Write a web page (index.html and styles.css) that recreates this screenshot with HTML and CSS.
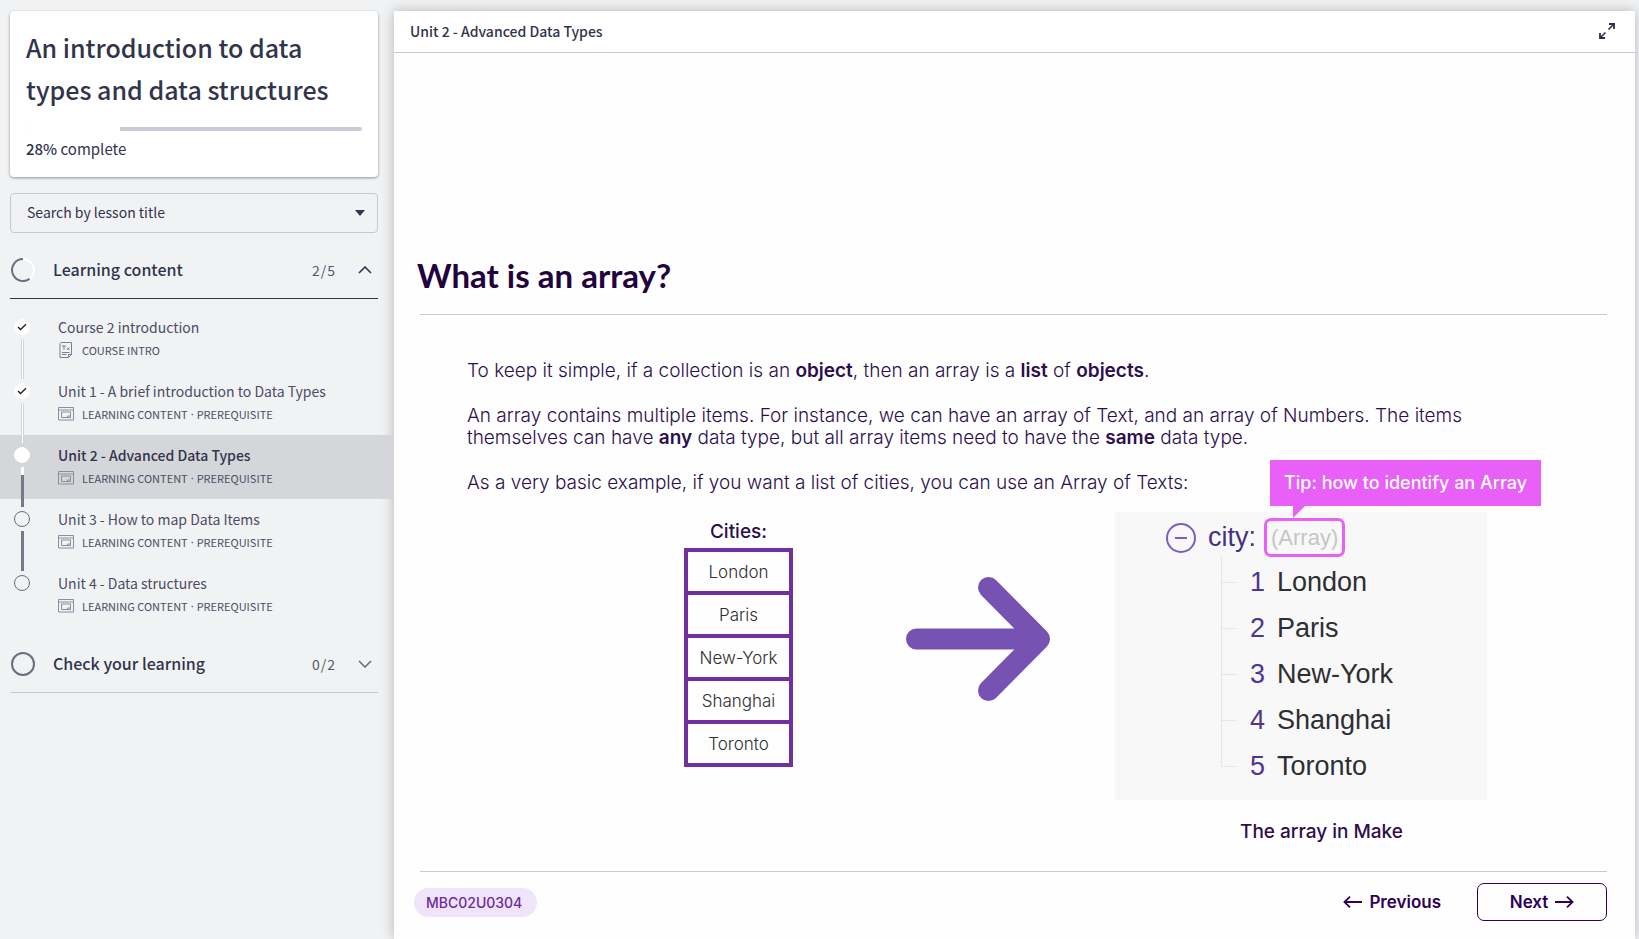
FILE: index.html
```html
<!DOCTYPE html>
<html lang="en">
<head>
<meta charset="utf-8">
<title>An introduction to data types and data structures</title>
<link rel="stylesheet" href="styles.css">
</head>
<body>
<svg class="sprite" aria-hidden="true">
  <symbol id="window" viewBox="0 0 16 14">
    <path d="M.5 .5h15v12.500h-15zM.5 3h15M3.500 5h9v5.500h-9zM9.500 10.500v-1.500h3" fill="none" stroke="#8b8d9e"/>
  </symbol>
  <symbol id="check" viewBox="0 0 10 8">
    <path d="M1 4l2.500 2.500L9 1.300" fill="none" stroke="#222230" stroke-width="1.400"/>
  </symbol>
</svg>
<div class="app">
  <aside class="sidebar">
    <section class="course">
      <h1 class="course-title">An introduction to data types and data structures</h1>
      <div class="progress" role="progressbar" aria-valuenow="28" aria-valuemin="0" aria-valuemax="100" aria-label="Course progress"><div class="progress-fill" style="width:28%"></div></div>
      <p class="course-status"><strong>28%</strong> complete</p>
    </section>

    <div class="search">
      <select class="search-select" aria-label="Search by lesson title"><option>Search by lesson title</option></select>
      <svg class="search-arrow" width="10" height="6" viewBox="0 0 10 6"><path d="M0 0h10L5 6z" fill="#31344b"/></svg>
    </div>

    <nav class="outline">
      <button class="section section-open" type="button">
        <svg width="24" height="24" viewBox="0 0 24 24" fill="none"><circle cx="12" cy="12" r="11" stroke="#fff" stroke-width="2"/><path d="M12 1a11 11 0 1 0 6.500 19.900" stroke="#6b6d80" stroke-width="2"/></svg>
        <span class="section-name">Learning content</span>
        <span class="section-count">2/5</span>
        <svg width="14" height="8" viewBox="0 0 14 8"><path d="M1 7l6-6 6 6" fill="none" stroke="#31344b" stroke-width="1.600"/></svg>
      </button>
      <ul class="lessons">
        <li class="lesson done"><a class="lesson-link" href="#l1">
          <span class="dot"><svg width="10" height="8"><use href="#check"/></svg></span>
          <span class="lesson-title">Course 2 introduction</span>
          <span class="lesson-meta"><svg class="meta-icon" width="16" height="16" viewBox="0 0 16 16" fill="none" stroke="#7d7f92"><path d="M3 .5h10.500v12l-3 3h-8.500V1.500zM10.500 15.500v-3h3M4 4h4M6 4v4M9 5.500l2.500 2.500M11.500 5.500L9 8M4 10.500h7.500M4 12.500h4.500"/></svg>COURSE INTRO</span>
        </a></li>
        <li class="lesson done"><a class="lesson-link" href="#l2">
          <span class="dot"><svg width="10" height="8"><use href="#check"/></svg></span>
          <span class="lesson-title">Unit 1 - A brief introduction to Data Types</span>
          <span class="lesson-meta"><svg class="meta-icon" width="16" height="14"><use href="#window"/></svg>LEARNING CONTENT<i class="sep">·</i>PREREQUISITE</span>
        </a></li>
        <li class="lesson current"><a class="lesson-link" href="#l3" aria-current="page">
          <span class="dot"></span>
          <span class="lesson-title">Unit 2 - Advanced Data Types</span>
          <span class="lesson-meta"><svg class="meta-icon" width="16" height="14"><use href="#window"/></svg>LEARNING CONTENT<i class="sep">·</i>PREREQUISITE</span>
        </a></li>
        <li class="lesson"><a class="lesson-link" href="#l4">
          <span class="dot"></span>
          <span class="lesson-title">Unit 3 - How to map Data Items</span>
          <span class="lesson-meta"><svg class="meta-icon" width="16" height="14"><use href="#window"/></svg>LEARNING CONTENT<i class="sep">·</i>PREREQUISITE</span>
        </a></li>
        <li class="lesson"><a class="lesson-link" href="#l5">
          <span class="dot"></span>
          <span class="lesson-title">Unit 4 - Data structures</span>
          <span class="lesson-meta"><svg class="meta-icon" width="16" height="14"><use href="#window"/></svg>LEARNING CONTENT<i class="sep">·</i>PREREQUISITE</span>
        </a></li>
      </ul>
      <button class="section" type="button">
        <svg width="24" height="24" viewBox="0 0 24 24" fill="none"><circle cx="12" cy="12" r="11" stroke="#6b6d80" stroke-width="2"/></svg>
        <span class="section-name">Check your learning</span>
        <span class="section-count">0/2</span>
        <svg width="14" height="8" viewBox="0 0 14 8"><path d="M1 1l6 6 6-6" fill="none" stroke="#6b6d80" stroke-width="1.600"/></svg>
      </button>
    </nav>
  </aside>

  <main class="viewer">
    <header class="viewer-bar">
      <h2 class="viewer-title">Unit 2 - Advanced Data Types</h2>
      <button class="expand" type="button" aria-label="Full screen"><svg width="16" height="16" viewBox="0 0 16 16" fill="none" stroke="#2c2e4a"><path d="M9.500 6.500L14.500 1.500M6.500 9.500L1.500 14.500" stroke-width="1.500"/><path d="M10 1h5v5M6 15H1v-5" stroke-width="1.800"/></svg></button>
    </header>

    <article class="slide">
      <h3 class="slide-title">What is an array?</h3>
      <div class="slide-body">
        <div class="prose">
          <p>To keep it simple, if a collection is an <b>object</b>, then an array is a <b>list</b> of <b>objects</b>.</p>
          <p>An array contains multiple items. For instance, we can have an array of Text, and an array of Numbers. The items themselves can have <b>any</b> data type, but all array items need to have the <b>same</b> data type.</p>
          <p>As a very basic example, if you want a list of cities, you can use an Array of Texts:</p>
        </div>
        <div class="figures">
          <table class="cities">
            <caption>Cities:</caption>
            <tbody>
              <tr><td>London</td></tr>
              <tr><td>Paris</td></tr>
              <tr><td>New-York</td></tr>
              <tr><td>Shanghai</td></tr>
              <tr><td>Toronto</td></tr>
            </tbody>
          </table>
          <svg class="arrow" width="144" height="124" viewBox="0 0 144 124" fill="none" stroke="#7652b3" stroke-width="21" stroke-linecap="round" stroke-linejoin="round"><path d="M10.500 62H132M82.500 10.500L133.500 62L82.500 113.500"/><path d="M112 42L132 62L112 82z" fill="#7652b3" stroke="none"/></svg>
          <figure class="sample">
            <div class="panel">
              <div class="node">
                <svg width="30" height="30" viewBox="0 0 30 30" fill="none" stroke="#7b5cc4" stroke-width="2"><circle cx="15" cy="15" r="14"/><path d="M9 15h12"/></svg>
                <span class="node-name">city:</span>
                <span class="node-type">(Array)<span class="tip">Tip: how to identify an Array<svg class="tip-tail" width="12" height="12" viewBox="0 0 12 12"><path d="M0 0h12L0 12z" fill="#e960f9"/></svg></span></span>
              </div>
              <ol class="tree">
                <li><span class="index">1</span>London</li>
                <li><span class="index">2</span>Paris</li>
                <li><span class="index">3</span>New-York</li>
                <li><span class="index">4</span>Shanghai</li>
                <li><span class="index">5</span>Toronto</li>
              </ol>
            </div>
            <figcaption class="sample-caption">The array in Make</figcaption>
          </figure>
        </div>
      </div>
      <footer class="slide-foot">
        <span class="code">MBC02U0304</span>
        <button class="nav-btn" type="button"><svg width="20" height="12" viewBox="0 0 20 12" fill="none" stroke="#2d0059" stroke-width="1.800"><path d="M19 6H1.500M7 .7L1.500 6 7 11.300"/></svg>Previous</button>
        <button class="nav-btn nav-next" type="button">Next<svg width="20" height="12" viewBox="0 0 20 12" fill="none" stroke="#2d0059" stroke-width="1.800"><path d="M1 6h17.500M13 .7L18.500 6 13 11.300"/></svg></button>
      </footer>
    </article>
  </main>
</div>
</body>
</html>
```
FILE: styles.css
```css
*, *::before, *::after { box-sizing: border-box; }
body {
  margin: 0;
  background: #f1f2f4;
  color: #31344b;
  font-family: "Noto Sans CJK SC", "Noto Sans", sans-serif;
  font-size: 14px;
}
h1, h2, h3, p, ul, ol, figure { margin: 0; padding: 0; }
ul, ol { list-style: none; }
button { font: inherit; color: inherit; background: none; border: 0; padding: 0; cursor: pointer; }
a { color: inherit; text-decoration: none; }
svg { flex: none; display: block; }
.sprite { position: absolute; width: 0; height: 0; }

.app { display: grid; grid-template-columns: 394px 1fr; min-height: 100vh; overflow: hidden; }

/* Sidebar */
.sidebar { padding-top: 11px; }
.course {
  margin: 0 16px 16px 10px;
  padding: 15px 16px 16px;
  background: #fff;
  border-radius: 4px;
  box-shadow: 0 1px 3px rgba(0, 0, 0, .4);
}
.course-title { font-size: 25px; line-height: 42px; font-weight: 500; }
.progress { margin-top: 17px; height: 4px; border-radius: 2px; background: #c9ccd6; overflow: hidden; }
.progress-fill { height: 100%; background: #fff; }
.course-status { margin-top: 6px; font-size: 15px; line-height: 24px; }
.course-status strong { font-weight: 500; }

.search { position: relative; margin: 0 16px 0 10px; }
.search-select {
  width: 100%; height: 40px; padding: 0 16px 2px;
  appearance: none;
  font: inherit; color: inherit;
  background: none;
  border: 1px solid #c5c8d3; border-radius: 4px;
}
.search-arrow { position: absolute; right: 13px; top: 17px; }

.outline { margin-top: 9px; }
.section {
  display: flex; align-items: center;
  width: calc(100% - 26px); height: 57px;
  margin: 0 16px 0 10px; padding: 0 6px 0 1px;
  border-bottom: 1px solid #c5c8d3;
  text-align: left;
}
.section-open { border-bottom-color: #31344b; }
.section-name { flex: 1; margin-left: 18px; padding-bottom: 2px; font-size: 16px; font-weight: 500; }
.section-count { margin-right: 22px; padding-bottom: 1px; letter-spacing: 1px; color: #55576b; }

.lessons { padding: 8px 0 9px; }
.lesson { position: relative; height: 64px; color: #4b4d63; }
.lesson-link {
  display: grid;
  grid-template-columns: 16px 1fr; column-gap: 28px;
  align-content: start;
  height: 100%; padding: 9px 16px 0 14px;
}
.lesson-title { line-height: 22px; }
.lesson-meta {
  grid-column: 2;
  display: flex; align-items: center;
  line-height: 24px;
  font-size: 11px;
}
.meta-icon { margin-right: 8px; }
.sep { margin: 0 3px; font: 11px/24px "Noto Sans", sans-serif; }
.dot {
  display: grid; place-items: center;
  width: 16px; height: 16px; margin-top: 3px;
  border: 1px solid #6b6d80; border-radius: 50%;
}
.done .dot, .current .dot { background: #fff; border-color: #fff; }
.current { background: #d5d6da; }
.current .lesson-title { font-weight: 500; color: #31344b; }
/* Connector from one lesson's dot to the next */
.lesson:not(:last-child)::after {
  content: ""; position: absolute; z-index: 1;
  left: 21px; top: 32px; width: 3px; height: 40px;
  background: #77798b; border: 0 solid #fff;
}
.lesson.done:not(:last-child)::after { background: #fff; border: 0 solid #d4d5da; border-width: 0 1px; }
.lesson.current:not(:last-child)::after { border-top-width: 8px; }

/* Viewer */
.viewer {
  display: flex; flex-direction: column;
  margin: 11px 4px 0 0;
  background: #fefefe;
  box-shadow: 0 0 12px rgba(0, 0, 0, .25);
}
.viewer-bar {
  display: flex; align-items: center; justify-content: space-between;
  height: 42px; padding: 0 20px 2px 16px;
  background: #fff;
  border-bottom: 1px solid #c5c8d3;
}
.viewer-title { font-size: 14px; font-weight: 500; }

.slide {
  flex: 1; display: flex; flex-direction: column;
  padding: 198px 28px 0 26px;
  font-family: Inter, "Liberation Sans", sans-serif;
  color: #2c0f4d;
}
.slide-title {
  margin-left: -3px; margin-bottom: 15px;
  font: 700 33px/48px Lato, sans-serif;
  color: #22033d;
}
.slide-body { border: solid #cfc8ca; border-width: 1px 0; padding: 45px 0 27px; }
.prose { margin: 0 120px 0 47px; font-size: 19px; line-height: 22px; font-weight: 300; }
.prose p + p { margin-top: 23px; }
.prose b { font-weight: 600; }

.figures {
  display: grid; align-items: start;
  grid-template-columns: 264fr auto 113fr auto 65fr auto 120fr;
  margin-top: 18px;
}
.cities { grid-column: 2; width: 109px; margin-top: 8px; border-collapse: collapse; }
.cities caption { padding-bottom: 4px; font-size: 19px; line-height: 24px; font-weight: 500; }
.cities td {
  height: 43px; padding: 0;
  border: 4px solid #7030a0;
  text-align: center;
  font-size: 17px; font-weight: 300; color: #303030;
}
.arrow { grid-column: 4; margin-top: 65px; }
.sample { grid-column: 6; }
.panel {
  width: 372px; height: 288px; padding: 6px 0 0 51px;
  background: #f8f8f8;
  font-family: "Liberation Sans", sans-serif; font-size: 27px;
  color: #2d2f33;
}
.node { display: flex; align-items: center; height: 39px; }
.node-name { margin: 0 8px 0 12px; color: #46327f; }
.node-type {
  position: relative;
  padding: 0 4px;
  border: 3px solid #e960f9; border-radius: 7px;
  font-size: 22px; line-height: 33px;
  color: #c5c5c9;
}
.tip {
  position: absolute; left: 3px; bottom: 48px;
  padding: 0 14px;
  background: #e960f9; color: #fff;
  font-family: Inter, sans-serif; font-size: 18px; line-height: 46px; font-weight: 500;
  white-space: nowrap;
}
.tip-tail { position: absolute; left: 23px; top: 100%; }
.tree { margin-left: 55px; }
.tree li { position: relative; height: 46px; padding: 0 0 0 29px; line-height: 50px; }
.tree li::before {
  content: ""; position: absolute; left: 0; top: 0;
  width: 16px; height: 26px;
  border: solid #e6e6ea; border-width: 0 0 1px 1px;
}
.tree li:not(:last-child)::after { content: ""; position: absolute; left: 0; top: 0; height: 100%; border-left: 1px solid #e6e6ea; }
.index { margin-right: 12px; color: #4d3590; }
.sample-caption { margin-top: 20px; padding-left: 41px; text-align: center; font-size: 19px; line-height: 24px; font-weight: 500; }

.slide-foot { display: flex; align-items: center; margin: 11px 0 0 -6px; }
.code {
  margin-right: auto; padding: 0 15px 0 12px;
  border-radius: 15px;
  background: #f0e4fa; color: #6b2aa0;
  font-size: 14px; line-height: 29px; font-weight: 500;
}
.nav-btn {
  display: flex; align-items: center; justify-content: center; gap: 6px;
  height: 38px;
  font-size: 17px; font-weight: 600; color: #2d0059;
}
.nav-next { width: 130px; margin-left: 36px; border: 1px solid #2d0059; border-radius: 7px; }
```
